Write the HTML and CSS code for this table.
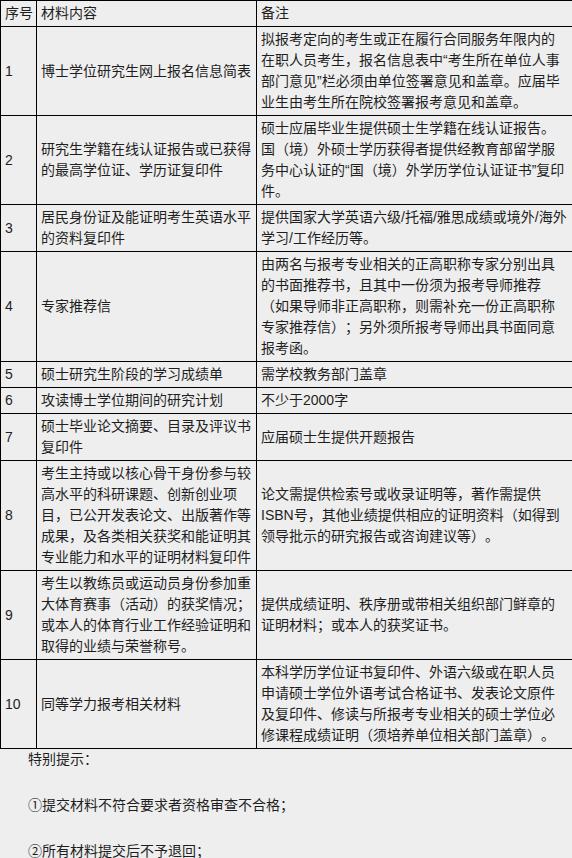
FILE: index.html
```html
<!DOCTYPE html>
<html lang="zh-CN">
<head>
<meta charset="utf-8">
<title>材料清单</title>
<link rel="stylesheet" href="styles.css">
</head>
<body>
<table class="materials">
  <colgroup>
    <col class="col-no">
    <col class="col-item">
    <col class="col-note">
  </colgroup>
  <tr>
    <td>序号</td>
    <td>材料内容</td>
    <td>备注</td>
  </tr>
  <tr>
    <td>1</td>
    <td>博士学位研究生网上报名信息简表</td>
    <td class="note">拟报考定向的考生或正在履行合同服务年限内的<br>在职人员考生，报名信息表中“考生所在单位人事<br>部门意见”栏必须由单位签署意见和盖章。应届毕<br>业生由考生所在院校签署报考意见和盖章。</td>
  </tr>
  <tr>
    <td>2</td>
    <td>研究生学籍在线认证报告或已获得的最高学位证、学历证复印件</td>
    <td class="note">硕士应届毕业生提供硕士生学籍在线认证报告。<br>国（境）外硕士学历获得者提供经教育部留学服<br>务中心认证的“国（境）外学历学位认证证书”复印<br>件。</td>
  </tr>
  <tr>
    <td>3</td>
    <td>居民身份证及能证明考生英语水平的资料复印件</td>
    <td class="note">提供国家大学英语六级/托福/雅思成绩或境外/海外<br>学习/工作经历等。</td>
  </tr>
  <tr>
    <td>4</td>
    <td>专家推荐信</td>
    <td class="note">由两名与报考专业相关的正高职称专家分别出具<br>的书面推荐书，且其中一份须为报考导师推荐<br>（如果导师非正高职称，则需补充一份正高职称<br>专家推荐信）；另外须所报考导师出具书面同意<br>报考函。</td>
  </tr>
  <tr>
    <td>5</td>
    <td>硕士研究生阶段的学习成绩单</td>
    <td class="note">需学校教务部门盖章</td>
  </tr>
  <tr>
    <td>6</td>
    <td>攻读博士学位期间的研究计划</td>
    <td class="note">不少于2000字</td>
  </tr>
  <tr>
    <td>7</td>
    <td>硕士毕业论文摘要、目录及评议书复印件</td>
    <td class="note">应届硕士生提供开题报告</td>
  </tr>
  <tr>
    <td>8</td>
    <td>考生主持或以核心骨干身份参与较高水平的科研课题、创新创业项目，已公开发表论文、出版著作等成果，及各类相关获奖和能证明其专业能力和水平的证明材料复印件</td>
    <td class="note">论文需提供检索号或收录证明等，著作需提供<br>ISBN号，其他业绩提供相应的证明资料（如得到<br>领导批示的研究报告或咨询建议等）。</td>
  </tr>
  <tr>
    <td>9</td>
    <td>考生以教练员或运动员身份参加重大体育赛事（活动）的获奖情况；或本人的体育行业工作经验证明和取得的业绩与荣誉称号。</td>
    <td class="note">提供成绩证明、秩序册或带相关组织部门鲜章的<br>证明材料；或本人的获奖证书。</td>
  </tr>
  <tr>
    <td>10</td>
    <td>同等学力报考相关材料</td>
    <td class="note">本科学历学位证书复印件、外语六级或在职人员<br>申请硕士学位外语考试合格证书、发表论文原件<br>及复印件、修读与所报考专业相关的硕士学位必<br>修课程成绩证明（须培养单位相关部门盖章）。</td>
  </tr>
</table>
<div class="tips">
  <p>特别提示：</p>
  <p>①提交材料不符合要求者资格审查不合格；</p>
  <p>②所有材料提交后不予退回；</p>
</div>
</body>
</html>
```

FILE: styles.css
```css
html, body {
  margin: 0;
  padding: 0;
  background: #eeeeee;
}

body {
  font-family: "Liberation Sans", "Noto Sans CJK SC", sans-serif;
  font-size: 14px;
  line-height: 21px;
  color: #1e1e1e;
  text-spacing-trim: space-all;
}

.materials {
  width: 572px;
  border-collapse: collapse;
  table-layout: fixed;
}

.col-no { width: 36px; }
.col-item { width: 220px; }
.col-note { width: 316px; }

.materials td {
  border: 1px solid #000000;
  padding: 2px 2px 2px 4px;
  vertical-align: middle;
  text-align: left;
}

.materials td.note {
  white-space: nowrap;
}

.tips p {
  margin: 0 0 25px;
  text-indent: 2em;
}
```
